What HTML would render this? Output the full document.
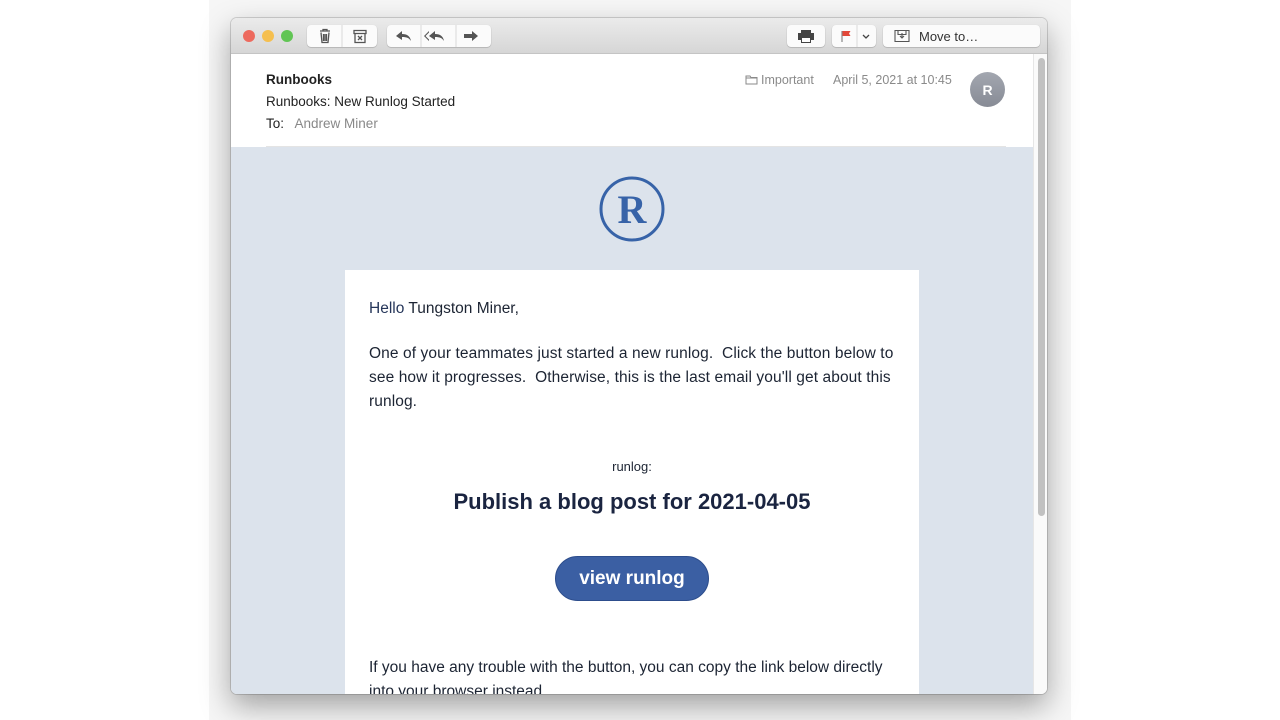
<!DOCTYPE html>
<html><head><meta charset="utf-8"><style>
*{margin:0;padding:0;box-sizing:border-box}
html,body{width:1280px;height:720px;overflow:hidden}
body{background:#fff;font-family:"Liberation Sans",sans-serif;position:relative}
.backdrop{position:absolute;left:209px;top:0;width:862px;height:720px;background:#f6f6f6}
.win{position:absolute;left:231px;top:18px;width:816px;height:676px;border-radius:6px;overflow:hidden;box-shadow:0 12px 30px rgba(0,0,0,.35),0 0 0 1px rgba(0,0,0,.15);background:#fff}
.tb{position:absolute;left:0;top:0;width:816px;height:36px;background:linear-gradient(#ebebeb,#d6d6d6);border-bottom:1px solid #c4c4c4}
.dot{position:absolute;top:12px;width:12px;height:12px;border-radius:50%}
.btn{position:absolute;top:7px;height:22px;background:#fbfbfb;border-radius:4px;box-shadow:0 0.5px 1px rgba(0,0,0,.3);display:flex;align-items:center;justify-content:center;color:#555;font-size:13px}
.hdr{position:absolute;left:0;top:36px;width:802px;height:93px;background:#fff}
.body{position:absolute;left:0;top:129px;width:802px;height:547px;background:#dce3ec;overflow:hidden}
.card{position:absolute;left:114px;top:123px;width:574px;height:500px;background:#fff;color:#1c2433;font-size:15.5px}
.sb{position:absolute;left:802px;top:36px;width:14px;height:640px;background:#fafafa;border-left:1px solid #e6e6e6}
.thumb{position:absolute;left:4px;top:4px;width:7px;height:458px;border-radius:4px;background:#c1c1c1}
</style></head><body>
<div class="backdrop"></div>
<div class="win">
 <div class="tb">
  <div class="dot" style="left:12px;background:#ed6a5e"></div>
  <div class="dot" style="left:31px;background:#f5bf4f"></div>
  <div class="dot" style="left:50px;background:#61c554"></div>
  <div class="btn" style="left:76px;width:70px"><svg width="70" height="22"><g fill="none" stroke="#555" stroke-width="1.3"><path d="M13 6h10M16 6V4.5h4V6M14 7.5l1 10h6l1-10M16.5 9v7M18 9v7M19.5 9v7"/><path d="M47 5.5h12v3H47zM48 8.5v9h10v-9M51 11l4 4M55 11l-4 4"/></g><line x1="35" y1="0" x2="35" y2="22" stroke="#d8d8d8"/></svg></div>
  <div class="btn" style="left:156px;width:104px"><svg width="104" height="22"><g fill="#555"><path d="M9 11l6-5v3c5 0 8 2 9 7-2-3-4-4-9-4v3z"/><path d="M42 11l6-5v3c5 0 8 2 9 7-2-3-4-4-9-4v3z"/><path d="M37 11l5-5v1.5L38.5 11l3.5 3.5V16z"/><path d="M77 9h8V6l6 5-6 5v-3h-8z"/></g><line x1="34" y1="0" x2="34" y2="22" stroke="#d8d8d8"/><line x1="69" y1="0" x2="69" y2="22" stroke="#d8d8d8"/></svg></div>
  <div class="btn" style="left:556px;width:38px"><svg width="20" height="16"><path d="M5 2h10v3H5zM2 5h16v7h-3v3H5v-3H2z" fill="#444"/><rect x="6" y="10" width="8" height="4" fill="#fff"/></svg></div>
  <div class="btn" style="left:601px;width:44px;justify-content:flex-start"><svg width="44" height="22"><path d="M10 6v11" stroke="#888" stroke-width="1.2"/><path d="M10.5 6h8l-1.5 2.5 1.5 2.5h-8z" fill="#e2483a"/><line x1="25" y1="0" x2="25" y2="22" stroke="#d8d8d8"/><path d="M31 10l3 3 3-3" stroke="#444" fill="none" stroke-width="1.3"/></svg></div>
  <div class="btn" style="left:652px;width:157px;justify-content:flex-start;color:#333"><svg width="36" height="22"><g fill="none" stroke="#555" stroke-width="1.1"><path d="M12 5.5h14v11H12zM15 5.5v4h8v-4M19 8v5M17 11l2 2 2-2"/></g></svg>Move to…</div>
 </div>
 <div class="hdr">
  <div style="position:absolute;left:35px;top:18px;font-size:13.5px;font-weight:bold;color:#222">Runbooks</div>
  <div style="position:absolute;left:35px;top:40px;font-size:13.5px;color:#222">Runbooks: New Runlog Started</div>
  <div style="position:absolute;left:35px;top:62px;font-size:13.5px;color:#222">To:&nbsp;&nbsp; <span style="color:#888">Andrew Miner</span></div>
  <div style="position:absolute;left:514px;top:19px;font-size:12.5px;color:#8a8a8a"><svg width="16" height="11" style="vertical-align:-1px"><path d="M1 2h4l1 1.5h6V10H1z" fill="none" stroke="#8a8a8a"/><path d="M1 4h11" stroke="#8a8a8a"/></svg>Important</div>
  <div style="position:absolute;left:602px;top:19px;font-size:12.5px;color:#8a8a8a">April 5, 2021 at 10:45</div>
  <div style="position:absolute;left:739px;top:18px;width:35px;height:35px;border-radius:50%;background:linear-gradient(#a3a7b0,#878b95);color:#fff;font-weight:bold;font-size:14px;display:flex;align-items:center;justify-content:center">R</div>
  <div style="position:absolute;left:35px;bottom:0;width:740px;border-top:1px solid #e4e4e4"></div>
 </div>
 <div class="body">
  <svg style="position:absolute;left:368px;top:29px" width="66" height="66"><circle cx="33" cy="33" r="31" fill="none" stroke="#3763a8" stroke-width="3"/><text x="33" y="47" text-anchor="middle" font-family="Liberation Serif,serif" font-weight="bold" font-size="40" fill="#3763a8">R</text></svg>
  <div class="card">
   <div style="position:absolute;left:24px;top:30px"><span style="color:#26365a">Hello</span> Tungston Miner,</div>
   <div style="position:absolute;left:24px;top:72px;width:540px;line-height:24px;letter-spacing:0.1px">One of your teammates just started a new runlog.&nbsp; Click the button below to see how it progresses.&nbsp; Otherwise, this is the last email you'll get about this runlog.</div>
   <div style="position:absolute;left:0;width:574px;top:189px;text-align:center;font-size:13px">runlog:</div>
   <div style="position:absolute;left:0;width:574px;top:219px;text-align:center;font-size:22px;font-weight:bold;color:#1a2440">Publish a blog post for 2021-04-05</div>
   <div style="position:absolute;left:210px;top:286px;width:154px;height:45px;border-radius:23px;background:#3b5fa3;border:1px solid #2d4d8c;color:#fff;font-size:19px;font-weight:bold;display:flex;align-items:center;justify-content:center">view runlog</div>
   <div style="position:absolute;left:24px;top:386px;width:540px;line-height:24px">If you have any trouble with the button, you can copy the link below directly into your browser instead.</div>
  </div>
 </div>
 <div class="sb"><div class="thumb"></div></div>
</div>
</body></html>
